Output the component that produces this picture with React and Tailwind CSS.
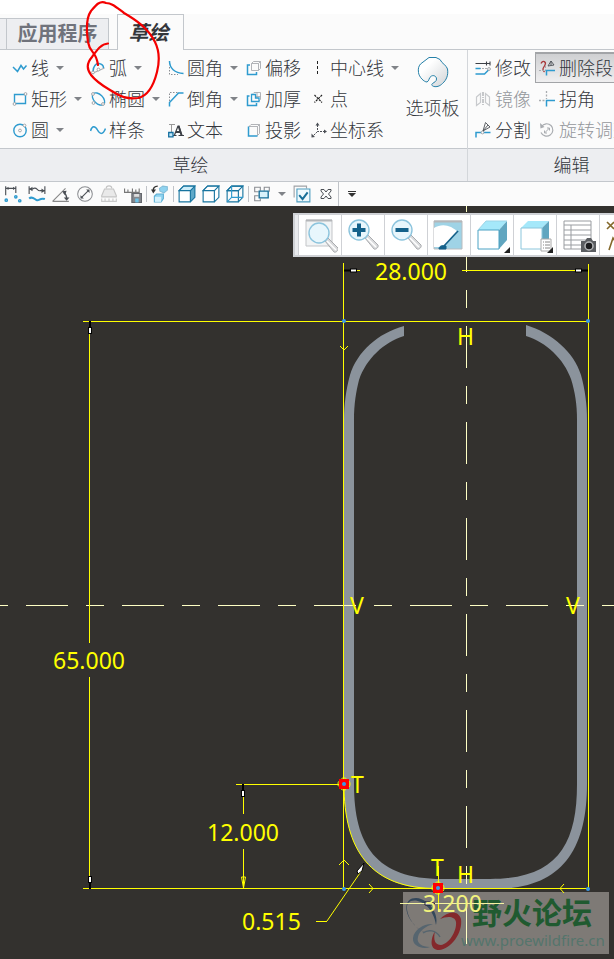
import React, { useState } from "react";

const BLUE = "#2e9bcf";
const DARK = "#4b4f55";
const GREY = "#a9acb0";

// Small icon wrapper used by the ribbon and the quick bar
const Icon = ({ children, className = "w-4 h-4" }) => (
  <svg viewBox="0 0 16 16" className={`shrink-0 ${className}`} fill="none" aria-hidden="true">
    {children}
  </svg>
);

const Caret = ({ className = "text-[#808388]" }) => (
  <svg viewBox="0 0 8 4" className={`w-2 h-1 shrink-0 ${className}`} aria-hidden="true">
    <path d="M0 0h8L4 4z" fill="currentColor" />
  </svg>
);

const Node = ({ x, y }) => <circle cx={x} cy={y} r="1.4" fill="#fff" stroke="#9a9da1" strokeWidth="0.900" />;

const icons = {
  line: (
    <Icon><path d="M1 7l4.500 4.500L9 5.500l2.500 3.500 3-3.500" stroke={BLUE} strokeWidth="1.500" /></Icon>
  ),
  rect: (
    <Icon>
      <path d="M2.500 3.500h11v9h-11z" stroke={BLUE} strokeWidth="1.400" />
      <Node x={13.500} y={3} /><Node x={2.500} y={13} />
    </Icon>
  ),
  circle: (
    <Icon>
      <circle cx="8" cy="8.500" r="6.200" stroke={BLUE} strokeWidth="1.400" />
      <Node x={8} y={8.500} /><Node x={12.500} y={3.500} />
    </Icon>
  ),
  arc: (
    <Icon>
      <path d="m2 13.500 12.500-5.500" stroke={GREY} strokeWidth="1.200" />
      <path d="M3 11.500c0-5 3-8.500 6-8 3 .5 4.500 2.500 4.500 4.500" stroke={BLUE} strokeWidth="1.500" />
      <Node x={3} y={12.500} /><Node x={8.500} y={9.500} />
    </Icon>
  ),
  ellipse: (
    <Icon>
      <ellipse cx="8.500" cy="8" rx="7.500" ry="4.500" transform="rotate(45 8.500 8)" stroke={BLUE} strokeWidth="1.300" />
      <Node x={3} y={3} /><Node x={3.500} y={12} /><Node x={13} y={13} />
    </Icon>
  ),
  spline: (
    <Icon><path d="M.5 9C2 3.500 5 3.500 7.500 8s5.500 5 8-1.500" stroke={BLUE} strokeWidth="1.500" /></Icon>
  ),
  fillet: (
    <Icon>
      <path d="M1.500 7v7.500H10" stroke="#8b8e93" strokeDasharray="1.500 1.500" />
      <path d="M1.500 1c0 7 5 12 14 12.500" stroke={BLUE} strokeWidth="1.500" />
    </Icon>
  ),
  chamfer: (
    <Icon>
      <path d="M1.500 10V1.500h8" stroke="#8b8e93" strokeDasharray="1.500 1.500" />
      <path d="M1.500 15.500v-4l9-9.500h5" stroke={BLUE} strokeWidth="1.500" />
    </Icon>
  ),
  text: (
    <Icon>
      <path d="M1 2.500h6M3.500 2.500v8" stroke="#999" />
      <path d="M5 13.500h3.500M10.500 13.500H16M6.500 13 10 4h1l3 9.500" stroke="#3c4046" strokeWidth="1.200" />
      <path d="m10.500 4 3 9.500M8 10h5" stroke="#3c4046" strokeWidth="1.800" />
      <path d="M.700 10.500h4.300v4.300H.700z" fill="#bfe6f7" stroke="#156fa0" strokeWidth="1.300" />
    </Icon>
  ),
  offset: (
    <Icon>
      <path d="M5.500 3.500h7v7h-7zm0 0 2-2h7v7l-2 2m0-7 2-2" stroke="#a9acb0" strokeWidth="0.900" />
      <path d="M4 5H1.500v9.500h9V12" stroke={BLUE} strokeWidth="1.500" />
    </Icon>
  ),
  thicken: (
    <Icon>
      <path d="M7 2.500 8 1.500h6.500v7l-2 2M11 1v6M10 5.500h4.500" stroke="#a9acb0" strokeWidth="0.900" />
      <path d="M5.500 3.500v7h7.500V7H9.500V3.500z" stroke={BLUE} strokeWidth="1.300" />
      <path d="M3.500 5H1.500v9.500h9V12" stroke={BLUE} strokeWidth="1.500" />
    </Icon>
  ),
  project: (
    <Icon>
      <path d="M3 4.500 5 2.500h8.500v9l-2 2M3 4.500h8.500v9M11.500 4.500l2-2" stroke="#a9acb0" strokeWidth="0.900" />
      <path d="M2.500 4.500v9.500h9" stroke={BLUE} strokeWidth="1.500" />
    </Icon>
  ),
  centerline: (
    <Icon><path d="M6.500 1v14" stroke="#222" strokeDasharray="3 2" shapeRendering="crispEdges" /></Icon>
  ),
  point: (
    <Icon><path d="m3.500 4 7.500 7.500m0-7.500-7.500 7.500" stroke="#222" strokeWidth="1.200" strokeDasharray="2.200 1" /></Icon>
  ),
  csys: (
    <Icon>
      <path d="M6.500 3v6.500H14M6.500 9.500 2 14" stroke={DARK} strokeDasharray="2 1" />
      <path d="m6.500 .5 2 3h-4zM16 9.500l-3 2v-4zM.5 15.500v-4l3.500 3.500z" fill={DARK} />
    </Icon>
  ),
  modify: (
    <Icon>
      <path d="M.5 3.500h14.500M15 1.500v4M11.500 1.500v4" stroke="#3c4046" strokeWidth="1.100" />
      <path d="M1 8.500h11" stroke={GREY} strokeDasharray="2 1" />
      <path d="M.5 8.500h5M.5 14h9l4.500-4.500" stroke={BLUE} strokeWidth="1.500" />
      <Node x={14} y={9} />
    </Icon>
  ),
  mirror: (
    <Icon>
      <path d="M8 1v14" stroke={GREY} strokeDasharray="4 1 1 1" strokeWidth="1.300" />
      <path d="m1.500 6 4-3.500v9l-4 3zM14.500 6l-4-3.500v9l4 3z" stroke="#c8cacd" strokeWidth="1.200" />
    </Icon>
  ),
  divide: (
    <Icon>
      <path d="M1 15.500v-5h14.500" stroke={BLUE} strokeWidth="1.500" />
      <Node x={7.500} y={10.500} />
      <path d="m8 9 2.500-8.500 4.500 4.500zM8 9l5-6" stroke={DARK} strokeWidth="0.900" />
    </Icon>
  ),
  trim: (
    <Icon>
      <path d="M2 3.500c2-4 5.500-1.500 4 1.500s-3.500 4-.5 7" stroke="#a8383a" strokeWidth="1.300" />
      <path d="M0 10.500h5M6.500 6v5" stroke={GREY} strokeDasharray="2 1.500" />
      <path d="M7.500 15.500v-5h8.500" stroke={BLUE} strokeWidth="1.500" />
      <path d="m9 6 3-5 3 4zM12 1v4" stroke={DARK} strokeWidth="0.900" />
    </Icon>
  ),
  corner: (
    <Icon>
      <path d="M7.500 0v8M0 9.500h6" stroke={GREY} strokeWidth="1.300" strokeDasharray="2 1.500" />
      <path d="M7.500 15.500v-6H16" stroke={BLUE} strokeWidth="1.500" />
    </Icon>
  ),
  rotate: (
    <Icon>
      <path d="M2.500 4.500a6.200 6.200 0 1 1-.5 6" stroke={GREY} strokeWidth="1.200" />
      <path d="m1 1 .5 5.500 4-1.500z" fill={GREY} />
      <path d="m5.500 11 5-5M10.500 8.500V6H8M5.500 8.500V11H8" stroke={GREY} />
    </Icon>
  ),
};

const sketchTools = [
  [["line", "线", true], ["rect", "矩形", true], ["circle", "圆", true]],
  [["arc", "弧", true], ["ellipse", "椭圆", true], ["spline", "样条"]],
  [["fillet", "圆角", true], ["chamfer", "倒角", true], ["text", "文本"]],
  [["offset", "偏移"], ["thicken", "加厚"], ["project", "投影"]],
  [["centerline", "中心线", true], ["point", "点"], ["csys", "坐标系"]],
];

const RibbonButton = ({ icon, label, menu }) => (
  <button
    type="button"
    className="flex h-[31px] items-center gap-[3px] whitespace-nowrap text-[18px] font-light leading-6 text-[#33363c]"
  >
    {icons[icon]}
    <span>{label}</span>
    {menu && <span className="pl-1"><Caret /></span>}
  </button>
);

const EditButton = ({ icon, label, disabled, active }) => (
  <button
    type="button"
    disabled={disabled}
    aria-pressed={active}
    className={`flex h-[31px] items-center gap-1 whitespace-nowrap border px-[3px] text-[18px] font-light leading-6 text-[#33363c] disabled:text-[#94979b] ${
      active
        ? "border-[#a2a4a7] border-t-2 bg-gradient-to-b from-[#cfd0d2] to-[#efeff0]"
        : "border-transparent"
    }`}
  >
    {icons[icon]}
    <span>{label}</span>
  </button>
);

const Cube = ({ fill, side, wire }) => (
  <Icon className="w-[18px] h-[18px]">
    <path d="m1 5 4-4h10v10l-4 4" fill={side} stroke="#17749f" />
    <path d="m1 5 4-4h10l-4 4z" fill={fill} stroke="#17749f" />
    <path d="M1 5h10v10H1z" fill={wire ? "none" : "#fff"} stroke="#17749f" />
    {wire && <path d="M5 1v10h10M5 11l-4 4" stroke="#2e9bcf" />}
  </Icon>
);

const QuickButton = ({ label, children }) => (
  <button type="button" aria-label={label} className="flex h-6 w-6 items-center justify-center">
    {children}
  </button>
);

const Divider = () => <span className="mx-px h-4 w-px bg-[#c0c3c8]" />;

const QuickBar = () => (
  <div className="flex h-6 items-center bg-[#fbfbfb] pl-px">
    <QuickButton label="尺寸显示">
      <Icon className="w-[18px] h-[18px]">
        <path d="M1.500 1v8M10.500 1v6M2 3h8" stroke={DARK} />
        <path d="m2 3 2-1.500v3zM10 3 8 1.500v3z" fill={DARK} />
        <g fill="#fff" stroke={BLUE} strokeWidth="1.300">
          <circle cx="2" cy="13.500" r="1" /><circle cx="10.500" cy="10.500" r="1" /><circle cx="14" cy="14" r="1" />
        </g>
      </Icon>
    </QuickButton>
    <QuickButton label="约束显示">
      <Icon className="w-[18px] h-[18px]">
        <path d="M1 1v7M15 1v7M1 3.500h3c4-3 4 2.500 7 1.500h4" stroke={DARK} />
        <path d="m1 3.500 3-2v4zM15 5l-3-2v4z" fill={DARK} />
        <path d="M1 12c3-2.500 5 1 7 1.500s3-2.500 7-1" stroke={BLUE} strokeWidth="1.800" />
      </Icon>
    </QuickButton>
    <QuickButton label="角度">
      <Icon className="w-[18px] h-[18px]">
        <path d="M.5 14.500h14.500M.5 14.500 12 3" stroke="#888" />
        <path d="M10.500 7c2 1 2.500 3 2.500 5" stroke={DARK} strokeWidth="1.300" />
        <path d="m9 5.500 4-.5-1.500 4zM10.500 11h5L13 14z" fill={DARK} />
      </Icon>
    </QuickButton>
    <QuickButton label="直径">
      <Icon className="w-[18px] h-[18px]">
        <circle cx="8" cy="8" r="6.500" stroke="#8a8c90" strokeWidth="0.900" />
        <path d="m5 11 6-6" stroke={DARK} />
        <path d="M4 12V9l3 3zM12 4v3L9 4z" fill={DARK} />
      </Icon>
    </QuickButton>
    <QuickButton label="锁定">
      <Icon className="w-[18px] h-[18px]">
        <path d="m1.500 9.500 2.500-6h8l2.500 6v1h-13z" fill="#e9e9e9" stroke="#c4c4c4" />
        <path d="M5.500 3c0-3 5-3 5 0" stroke="#c4c4c4" />
        <path d="M1 14.500h14M1.500 12v2M4.500 12v2M8 12v2M11.500 12v2M14.500 12v2" stroke="#c9c9c9" />
      </Icon>
    </QuickButton>
    <QuickButton label="保存尺寸">
      <Icon className="w-[18px] h-[18px]">
        <path d="M0 6.500h14M.5 3v3M3.500 4v2M7.500 3v3M10.500 4v2M13.500 3v3" stroke="#777" />
        <path d="M7 7.500h8.500v8H7z" fill="#85888d" stroke="#65686d" />
        <path d="M9 8h4.500v2.500H9z" fill="#ddd" />
        <path d="M10 12h3v3.500h-3z" fill="#6cc3e8" />
      </Icon>
    </QuickButton>
    <Divider />
    <QuickButton label="重定向">
      <Icon className="w-[18px] h-[18px]">
        <path d="M6 1C3 1 2 3 2 5" stroke="#333" strokeWidth="1.300" />
        <path d="M0 4h4.500L2 7.500z" fill="#333" />
        <path d="m7.500 3 3-2 4 .5v3L11.500 7 8 5.500z" fill="#8fd3f0" stroke="#86bfd9" />
        <path d="m3 10 2-2h6v4l-2 3H3z" fill="#8fd3f0" stroke="#5fb0d4" />
        <path d="M3.500 10.500H9v4.500H3.500z" fill="#d4f1fc" />
      </Icon>
    </QuickButton>
    <Divider />
    <QuickButton label="着色"><Cube fill="#cdeefa" side="#5fa9c8" /></QuickButton>
    <QuickButton label="消隐"><Cube fill="#fff" side="#fff" /></QuickButton>
    <QuickButton label="线框"><Cube fill="none" side="none" wire /></QuickButton>
    <Divider />
    <QuickButton label="窗口">
      <Icon className="w-[18px] h-[18px]">
        <path d="M5 6H1.500V2h5v3M10 5V2h4.500v4M5 9.500H1.500v4.500h5v-2" stroke="#8b8e93" />
        <path d="M5.500 5.500h8v6h-8z" fill="#d9f1fa" stroke="#176e98" strokeWidth="1.200" />
      </Icon>
    </QuickButton>
    <button type="button" aria-label="窗口菜单" className="flex w-4 justify-center"><Caret /></button>
    <QuickButton label="选项">
      <Icon className="w-[18px] h-[18px]">
        <path d="M1 11V1h11v2" stroke="#a0a3a7" />
        <path d="M3.500 3.500H15V15H3.500z" fill="#eef9fd" stroke="#4f9dbf" />
        <path d="m5.500 9 3 3.500L13 6.500" stroke="#176e98" strokeWidth="1.800" />
      </Icon>
    </QuickButton>
    <QuickButton label="关闭">
      <Icon className="w-4 h-4">
        <path d="M3 3.500h3l2 2.500 2-2.500h3V5l-2.500 3 2.500 3v1.500h-3L8 10l-2 2.500H3V11l2.500-3L3 5z" stroke={DARK} />
      </Icon>
    </QuickButton>
    <span className="mr-px h-6 w-px bg-[#c0c3c8]" />
    <button type="button" aria-label="自定义" className="flex h-6 w-6 flex-col items-center justify-center gap-px">
      <span className="h-px w-2 bg-[#333]" />
      <Caret className="text-[#333]" />
    </button>
  </div>
);

const Ribbon = () => (
  <div className="flex border-b border-[#c3c7cc]">
    <section className="w-[467px] shrink-0">
      <div className="flex h-[98px] bg-[#fbfbfb] pl-3 pt-[2px]">
        <div className="grid shrink-0 grid-cols-[78px_78px_78px_65px_87px]">
          {sketchTools.map((column, i) => (
            <div key={i} className="flex flex-col">
              {column.map(([icon, label, menu]) => (
                <RibbonButton key={icon} icon={icon} label={label} menu={menu} />
              ))}
            </div>
          ))}
        </div>
        <button type="button" className="flex flex-1 flex-col items-center whitespace-nowrap pt-1 text-[18px] font-light leading-6 text-[#33363c]">
          <svg viewBox="0 0 32 32" className="h-8 w-8" fill="none" aria-hidden="true">
            <defs>
              <linearGradient id="pal" x1="0" y1="0" x2="1" y2="1">
                <stop offset="0.300" stopColor="#fff" />
                <stop offset="1" stopColor="#d0d3d6" />
              </linearGradient>
            </defs>
            <path
              d="M12 1.500h7l4 2c2 4.500 6.500 5.500 7.500 9.500 1 6-1 11-5 14.500-3 3-6 3.500-8.500 3-2-.5-3-2-1.500-3 2-1.500 4-2 4-4.500 0-3-3-4-5-3-3 1.500-2 5-4.500 6-3 0-8-5-8.500-9.500-.5-4 0-6 2-8.500z"
              fill="url(#pal)" stroke="#2480a8"
            />
          </svg>
          <span className="pt-2">选项板</span>
        </button>
      </div>
      <h2 className="border-t border-[#c3c7cc] bg-[#edeef1] pr-[86px] text-center text-[18px] font-light leading-8 text-[#33363c]">草绘</h2>
    </section>
    <section className="w-[208px] shrink-0 border-l border-[#d3d6da]">
      <div className="flex h-[98px] bg-[#fbfbfb] pl-[3px] pt-[2px]">
        <div className="flex w-16 flex-col">
          <EditButton icon="modify" label="修改" />
          <EditButton icon="mirror" label="镜像" disabled />
          <EditButton icon="divide" label="分割" />
        </div>
        <div className="flex flex-1 flex-col">
          <EditButton icon="trim" label="删除段" active />
          <EditButton icon="corner" label="拐角" />
          <EditButton icon="rotate" label="旋转调整" disabled />
        </div>
      </div>
      <h2 className="border-t border-[#c3c7cc] bg-[#edeef1] text-center text-[18px] font-light leading-8 text-[#33363c]">编辑</h2>
    </section>
  </div>
);

const Lens = ({ children }) => (
  <>
    <path d="m20 21 3-3 10 10c1 2-2 5-4 4z" fill="#d9dadc" stroke="#a9abae" />
    <path d="m22 21 9 9" stroke="#fff" strokeWidth="1.500" />
    <circle cx="14" cy="13" r="10" fill="#e8f6fc" stroke="#8cc4dd" strokeWidth="1.400" />
    {children}
  </>
);

const viewTools = [
  {
    label: "重新调整",
    art: (
      <>
        <path d="M4 3h26v26H4z" fill="#f2f4f5" stroke="#c3c5c8" />
        <path d="M4 3.500h26" stroke="#b4b6b9" strokeWidth="2" />
        <g transform="translate(3 3)"><Lens /></g>
      </>
    ),
  },
  { label: "放大", art: <Lens><path d="M14 6.500v13M7.500 13h13" stroke="#14618a" strokeWidth="4" /></Lens> },
  { label: "缩小", art: <Lens><path d="M7.500 13h13" stroke="#14618a" strokeWidth="4" /></Lens> },
  {
    label: "重画",
    art: (
      <>
        <path d="M3 4h28v28H3z" fill="#9fd3e6" stroke="#b9bbbe" />
        <path d="M3 11C11 6 20 8 27 15L13 30H3z" fill="#fff" />
        <path d="M3 4.500h28" stroke="#b4b6b9" strokeWidth="2" />
        <path d="m13 29 14-15" stroke="#14618a" strokeWidth="1.800" />
        <path d="M8 32c0-3 3-4 7-3v3z" fill="#14618a" stroke="#14618a" />
      </>
    ),
  },
  {
    label: "显示样式",
    art: (
      <>
        <path d="m4 13 8-9h21l-8 9z" fill="#a5e8fa" />
        <path d="m25 13 8-9v19l-8 9z" fill="#61a6c0" />
        <path d="M4 13h21v19H4z" fill="#fff" stroke="#4aa2c4" />
        <path d="m4 13 8-9h21" stroke="#9cd4e6" />
        <path d="M36 30v6h-6z" fill="#222" />
      </>
    ),
  },
  {
    label: "已保存方向",
    art: (
      <>
        <path d="m4 11 7-7h21l-7 7z" fill="#a5e8fa" />
        <path d="m25 11 7-7v19l-7 7z" fill="#61a6c0" />
        <path d="M4 11h21v21H4z" fill="#fff" stroke="#8bc6dc" />
        <path d="M24 22h10v12H24z" fill="#fff" stroke="#aaa" />
        <path d="M26 25h1M28 25h5M26 28h1M28 28h5M26 31h1M28 31h5" stroke="#888" />
        <path d="M36 30v6h-6z" fill="#222" />
      </>
    ),
  },
  {
    label: "视图管理器",
    art: (
      <>
        <path d="M4 4h27v28H4zM11 8v24M4 8h27M4 13h27M4 18h27M4 23h27M4 28h27" fill="#fff" stroke="#9a9da1" />
        <path d="M21 24h4l2-3h4l2 3h3v11H21z" fill="#5b5e62" />
        <circle cx="29" cy="29" r="4" fill="#1d1e20" stroke="#b5b7ba" strokeWidth="1.500" />
      </>
    ),
  },
];

const ViewToolbar = () => (
  <div className="absolute left-[293px] right-0 top-[7px] flex h-11 overflow-hidden border-y-2 border-l-2 border-[#cfd1d5] bg-white">
    <span className="w-1 shrink-0 border-r border-[#cfd1d5] bg-[#e9eaed]" />
    {viewTools.map(({ label, art }) => (
      <button key={label} type="button" aria-label={label} className="flex w-[43px] shrink-0 items-center justify-center border-r border-[#cfd1d5]">
        <svg viewBox="0 0 36 36" className="h-9 w-9" fill="none" aria-hidden="true">{art}</svg>
      </button>
    ))}
    <button type="button" aria-label="基准显示" className="flex w-[43px] shrink-0 items-center pl-1">
      <svg viewBox="0 0 36 36" className="h-9 w-9" fill="none" aria-hidden="true">
        <path d="m3 5 7 7m0-7-7 7M5 33l4-12 8 12" stroke="#84682b" strokeWidth="1.600" />
      </svg>
    </button>
  </div>
);

// Arrowhead of a dimension: a dark stem with a small white box
const DimHead = ({ x, y, angle }) => (
  <g transform={`translate(${x} ${y}) rotate(${angle})`}>
    <path d="M0 0h7" stroke="#000" strokeWidth="2" />
    <rect x="6.500" y="-1.500" width="6" height="3" fill="#fff" stroke="#000" />
  </g>
);

const corners = [[344, 321], [588, 321], [344, 889], [588, 889]];
const tangents = [[344, 784], [438, 888]];

const dimensions = [
  ["28.000", 375, 280],
  ["65.000", 53, 669],
  ["12.000", 207, 841],
  ["0.515", 242, 930],
];

const constraints = [
  ["H", 457, 345],
  ["V", 350, 614],
  ["V", 566, 614],
  ["T", 351, 793],
  ["T", 431, 876],
  ["H", 457, 883],
];

const Sketch = () => (
  <svg viewBox="0 206 614 753" className="block w-full" fill="none" role="img" aria-label="草绘">
    {/* Tube section */}
    <path
      d="M404 326C378 333 357 352 350 375C346 390 344 404 344 420V784C344 850 370 889 438 889H494C562 889 587 850 587 784V420C587 404 585 390 581 375C574 352 552 333 526 325V336C546 342 564 359 571 379C575 392 577 404 577 420V784C577 845 557 879 490 879H442C376 879 354 845 354 784V420C354 404 356 392 359 380C366 359 384 342 404 336Z"
      fill="#8b939c"
    />

    {/* Forum mark */}
    <g>
      <rect x="403" y="892" width="206" height="62" fill="#c9c3be" fillOpacity="0.500" />
      <path d="M436 925c3-10-6-26-20-27-12 0-12 14-4 24 5 6 8 9 13 10-13-4-21-22-17-29 7-7 25 1 28 22z" fill="#33475a" />
      <path d="M433 924c-8-1-19 5-20 14-1 8 10 12 17 9-8 0-14-4-12-10 1-6 8-11 15-13z" fill="#56656f" />
      <path d="M440 919c8-8 18-9 21 0 2 14-10 30-22 31-9 0-9-10-4-19-2 9 0 14 6 14 8-1 16-14 15-23-1-6-9-6-16-3z" fill="#84292c" />
      <path d="M423 933c5-4 13-3 17 4" stroke="#56656f" strokeWidth="1.500" />
      <text x="472" y="924" fontSize="30" fontWeight="700" fill="#205a30" fontFamily="'Noto Sans CJK SC', sans-serif">野火论坛</text>
      <text x="461" y="946" fontSize="15" fill="#54756c" fontFamily="'Noto Sans', sans-serif">www.proewildfire.cn</text>
    </g>

    {/* Centre lines */}
    <g stroke="#ffffc4" shapeRendering="crispEdges">
      <path d="M-70 605.500H614" strokeDasharray="42 18 18 18" />
      <path d="M466.500 134V944" strokeDasharray="42 18 18 18" />
    </g>

    {/* Reference and dimension lines */}
    <g stroke="#ffff00" shapeRendering="crispEdges">
      <path d="M343.500 263V889M588.500 264V889M83 321.500H588M83 888.500H588" />
      <path d="M344 270.500H360M462 270.500H588" />
      <path d="M89.500 321V643M89.500 677V888" />
      <path d="M236 784.500H344M243.500 784V814M243.500 849V888" />
      <path d="M316 921.500H327M438.500 866V912" />
    </g>
    <path d="M400 903.500H504" stroke="#f4f4a0" shapeRendering="crispEdges" />
    <g stroke="#ffff00">
      <path d="m327 921 35-51M344 784C344 850 370 889 438 888.500" />
      <path d="m340 346 4 4 4-4M339 865l5-5 5 5M369 884l4 4.500-4 4.500M564 884l-4 4.500 4 4.500" />
      <path d="M241.500 877h4l-2 11z" />
    </g>
    <DimHead x={344} y={270.500} angle={0} />
    <DimHead x={588} y={270.500} angle={180} />
    <DimHead x={90} y={321} angle={90} />
    <DimHead x={90} y={889} angle={-90} />
    <DimHead x={243} y={784} angle={90} />
    <path d="m364 863-2 8-4 3-1-3z" fill="#fff" stroke="#000" />
    <path d="M425 902h6l4 1.500-4 1.500h-6z" fill="#fff" stroke="#223" />

    {/* End points */}
    {tangents.map(([x, y]) => (
      <g key={x}>
        <rect x={x - 5} y={y - 5} width="10" height="10" fill="#ff0000" />
        <circle cx={x} cy={y} r="6" stroke="#ffff00" strokeDasharray="5 4" strokeDashoffset="2" />
        <circle cx={x} cy={y} r="2" fill="#3b9be8" />
      </g>
    ))}
    {corners.map(([x, y]) => (
      <circle key={`${x}-${y}`} cx={x} cy={y} r="2" fill="#3b9be8" />
    ))}

    <g fill="#ffff00" fontFamily="'Noto Sans', 'Open Sans', sans-serif" fontSize="23">
      {dimensions.map(([value, x, y]) => (
        <text key={value} x={x} y={y}>{value}</text>
      ))}
      {constraints.map(([mark, x, y]) => (
        <text key={`${x}-${y}`} x={x} y={y}>{mark}</text>
      ))}
      <text x="423" y="912" fill="#f2f27c">3.200</text>
    </g>
  </svg>
);

const App = () => {
  const [tab, setTab] = useState("sketch");

  return (
    <div className="relative min-h-screen w-full overflow-hidden bg-[#33312e] font-['Noto_Sans','Noto_Sans_CJK_SC',sans-serif]">
      <header>
        {/* Tabs */}
        <nav className="bg-white pt-[14px]">
          <div className="flex h-9 items-end bg-[#fbfbfb]">
            <span className="h-8 w-[6px] border-b border-t border-[#c3c7cc] bg-[#edeef1]" />
            <button
              type="button"
              onClick={() => setTab("app")}
              className="h-8 w-[103px] border border-[#c3c7cc] bg-[#edeef1] text-[20px] font-bold leading-7 text-[#70737c]"
            >
              应用程序
            </button>
            <span className="h-px w-2 bg-[#c3c7cc]" />
            <button
              type="button"
              onClick={() => setTab("sketch")}
              aria-current={tab === "sketch"}
              className="h-9 w-[67px] border-x border-t border-[#c3c7cc] bg-[#fbfbfb] pr-1 text-[20px] font-bold italic text-[#33363b]"
            >
              草绘
            </button>
            <span className="h-px flex-1 bg-[#c3c7cc]" />
          </div>
        </nav>
        <Ribbon />
        <QuickBar />
      </header>

      <main className="relative">
        <Sketch />
        <ViewToolbar />
      </main>

      {/* Red pen mark around the arc tool */}
      <svg viewBox="0 0 170 104" className="pointer-events-none absolute left-0 top-0 h-[104px] w-[170px]" fill="none" aria-hidden="true">
        <path
          d="M108 43.500C101 44 97 50 92 57C86 64 87 69 91 75C98 84 107 88 115 93C123 98 131 99 138 98C148 96 154 84 157 72C160 60 159 50 155 42C148 28 136 20 124 13C116 7 112 3 106 3C100 0 96 5 91 11C86 18 86 28 88 42C90 54 96 50 98 65"
          stroke="#f40000" strokeWidth="2.200" strokeLinecap="round"
        />
      </svg>
    </div>
  );
};

export default App;
